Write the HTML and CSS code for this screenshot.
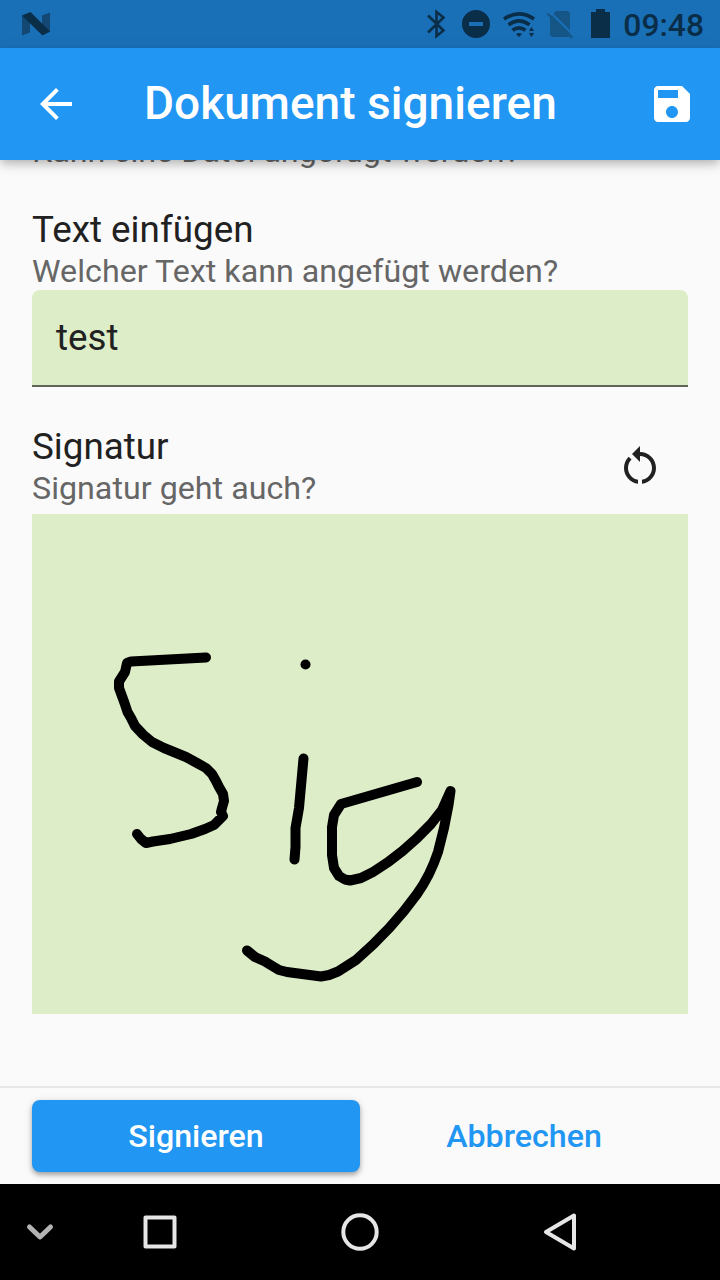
FILE: index.html
```html
<!DOCTYPE html>
<html lang="de">
<head>
<meta charset="utf-8">
<title>Dokument signieren</title>
<link rel="stylesheet" href="styles.css">
</head>
<body>
<div class="screen">
  <div class="status-bar">
    <svg class="status-logo" width="28" height="24" viewBox="0 0 28 24">
      <path d="M0 3.500L8 1V20.500L0 23.500ZM20 3.500L28 0.500V20L20 23Z" fill="#124873"/>
      <path d="M0 3.500L8.500 0L28 19.500L20.500 23.500Z" fill="#0a2d48"/>
    </svg>
    <svg class="status-icons" width="202" height="48" viewBox="0 0 202 48" fill="#0a2d48">
      <path d="M8 15.500L23.500 30.500L16.500 36V12L23.500 17.500L8 32.500" fill="none" stroke="#0a2d48" stroke-width="2.600"/>
      <path fill-rule="evenodd" d="M56 10a14 14 0 1 1 0 28a14 14 0 1 1 0-28ZM49 22v4h14v-4Z"/>
      <g fill="none" stroke="#0a2d48" stroke-width="3.600">
        <path d="M84 19Q99 8.800 114 19"/>
        <path d="M88.500 24.800Q99 17 109.500 24.800"/>
        <path d="M92.500 30.300Q99 25.500 105.500 30.300"/>
      </g>
      <path d="M96 34Q99 32 102 34L99 37ZM109 31l2.500-4L114 31ZM109 33h5L111.500 37Z"/>
      <path d="M130 17L136 11H147Q150 11 150 14V34Q150 37 147 37H133Q130 37 130 34Z" fill="#155687"/>
      <path d="M129 11L154 35.500" stroke="#1a70b7" stroke-width="2.200"/>
      <path d="M127.500 13.500L152 37.700" stroke="#155687" stroke-width="2.400"/>
      <path d="M171 12h5V9h9v3h5V38H171Z"/>
    </svg>
    <span class="clock">09:48</span>
  </div>

  <header class="app-bar">
    <svg class="icon" viewBox="0 0 24 24"><path d="M20 11H7.830l5.590-5.590L12 4l-8 8 8 8 1.410-1.410L7.830 13H20v-2z"/></svg>
    <h1 class="title">Dokument signieren</h1>
    <svg class="icon" viewBox="0 0 24 24"><path d="M17 3H5c-1.110 0-2 .9-2 2v14c0 1.100.89 2 2 2h14c1.100 0 2-.9 2-2V7l-4-4zm-5 16c-1.660 0-3-1.340-3-3s1.340-3 3-3 3 1.340 3 3-1.340 3-3 3zm3-10H5V5h10v4z"/></svg>
  </header>

  <main class="content">
    <p class="hint hint-scrolled">Kann eine Datei angefügt werden?</p>

    <section class="field">
      <h2 class="label">Text einfügen</h2>
      <p class="hint">Welcher Text kann angefügt werden?</p>
      <div class="text-input">test</div>
    </section>

    <section class="field">
      <div class="field-head">
        <div>
          <h2 class="label">Signatur</h2>
          <p class="hint">Signatur geht auch?</p>
        </div>
        <svg class="icon icon-dark" viewBox="0 0 24 24"><path d="M12 5V2L8 6l4 4V7c3.310 0 6 2.690 6 6 0 2.970-2.170 5.430-5 5.910v2.020c3.950-.49 7-3.850 7-7.930 0-4.420-3.580-8-8-8zm-6 8c0-1.650.67-3.150 1.760-4.240L6.340 7.340C4.900 8.790 4 10.790 4 13c0 4.080 3.050 7.440 7 7.930v-2.020c-2.830-.48-5-2.940-5-5.910z"/></svg>
      </div>
      <svg class="signature" width="656" height="500" viewBox="32 514 656 500">
        <path d="M206 657.500L131 661.500L127 663L125 672L119 681.500V688L124.500 703L127.500 712L131 718L135 726L143 734.500L152 742L164 748L186 757L197 763L206 768L212 774L216 781L219 787L223 794L224 801L222 808L221 812L223 816L214 825L205 829L191 834L170 839L153 841.500L146 843L141 839L137 834"/>
        <path d="M305.500 664.500h.01"/>
        <path d="M303.500 758.500L299 808L295.500 828V847L294.500 859.500"/>
        <path d="M417 782L341 804L334 815L332 827V855L334 868L339 876L345 879.500L350 880.500L361 878L373 872Q403 854 431 824L442 810L450.500 791L448.500 805L444 828L438 852Q430 876 417 894Q392 929 356 960L338 971.500L329 975L321 976.500L287 972L279 970L269 964L265 961.500L255 957L247 950.500"/>
      </svg>
    </section>
  </main>

  <footer class="actions">
    <div class="button button-primary">Signieren</div>
    <div class="button button-flat">Abbrechen</div>
  </footer>

  <svg class="nav-bar" width="720" height="96" viewBox="0 0 720 96" fill="none" stroke="#e6e6e6" stroke-width="4" stroke-linejoin="round">
    <path d="M29.500 43L40 53L50.500 43" stroke="#b3b3b3" stroke-width="5" stroke-linecap="round"/>
    <rect x="145.500" y="33.500" width="29" height="29"/>
    <circle cx="360" cy="48" r="16.700"/>
    <path d="M574 31.500V64.500L546 48Z"/>
  </svg>
</div>
</body>
</html>
```
FILE: styles.css
```css
* { box-sizing: border-box; }

body {
  margin: 0;
  font-family: Roboto, "Liberation Sans", sans-serif;
  color: #212121;
}

h1, h2, p { margin: 0; font-weight: 400; }

svg { display: block; flex: none; }

.screen {
  width: 720px;
  height: 1280px;
  display: flex;
  flex-direction: column;
  background: #fafafa;
  overflow: hidden;
}

.status-bar {
  flex: none;
  height: 48px;
  display: flex;
  align-items: center;
  padding: 0 16px 0 22px;
  background: #1a70b7;
  color: #0a2d48;
}

.status-icons { margin-left: auto; }

.clock {
  width: 82px;
  text-align: right;
  font-size: 31.800px;
  line-height: 48px;
  font-weight: 500;
  padding-top: 2px;
}

.app-bar {
  flex: none;
  height: 112px;
  display: flex;
  align-items: center;
  padding: 0 24px 0 32px;
  background: #2196f3;
  color: #fff;
  box-shadow: 0 4px 8px -2px rgba(0, 0, 0, .16), 0 6px 10px rgba(0, 0, 0, .1), 0 2px 16px rgba(0, 0, 0, .08);
  z-index: 1;
}

.icon { width: 48px; height: 48px; fill: currentColor; }

.title {
  flex: 1;
  padding: 0 0 2px 64px;
  font-size: 46px;
  line-height: 54px;
  font-weight: 500;
  letter-spacing: .03px;
  white-space: nowrap;
}

.content {
  flex: 1;
  min-height: 0;
  padding: 0 32px;
}

.hint {
  font-size: 32.200px;
  line-height: 38px;
  letter-spacing: .02px;
  color: #666;
  white-space: nowrap;
}

.hint-scrolled { margin-top: -28px; }

.label {
  padding-bottom: 1px;
  font-size: 36.800px;
  line-height: 43px;
}

.field { margin-top: 38px; }

.text-input {
  height: 97px;
  padding: 0 24px;
  font-size: 36.800px;
  line-height: 95px;
  background: #ddedc8;
  border-bottom: 2px solid #5f6558;
  border-radius: 8px 8px 0 0;
}

.field-head {
  display: flex;
  justify-content: space-between;
  align-items: center;
  height: 89px;
  padding: 0 24px 7px 0;
}

.icon-dark { color: #212121; }

.signature {
  background: #ddedc8;
  fill: none;
  stroke: #000;
  stroke-width: 10;
  stroke-linecap: round;
  stroke-linejoin: round;
}

.actions {
  flex: none;
  height: 98px;
  display: flex;
  padding: 12px 32px;
  border-top: 2px solid #e8e8e8;
}

.button {
  flex: 1;
  height: 72px;
  border-radius: 8px;
  font-size: 32.200px;
  line-height: 72px;
  font-weight: 500;
  text-align: center;
}

.button-primary {
  background: #2196f3;
  color: #fff;
  box-shadow: 0 3px 4px rgba(0, 0, 0, .25), 0 2px 8px rgba(0, 0, 0, .15);
}

.button-flat { color: #2196f3; }

.nav-bar { background: #000; }
```
